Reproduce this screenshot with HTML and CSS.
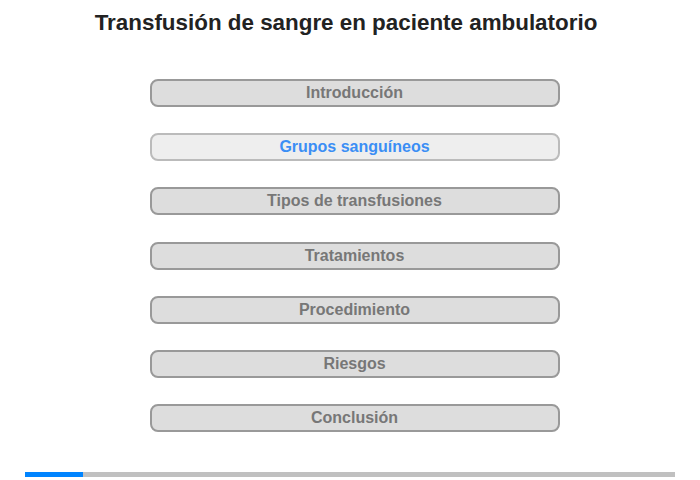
FILE: index.html
```html
<!DOCTYPE html>
<html lang="es">
<head>
<meta charset="utf-8">
<title>Transfusión de sangre en paciente ambulatorio</title>
<link rel="stylesheet" href="styles.css">
</head>
<body>
<div class="page">
  <h1 class="title">Transfusión de sangre en paciente ambulatorio</h1>
  <nav class="menu">
    <div class="item">Introducción</div>
    <div class="item active">Grupos sanguíneos</div>
    <div class="item">Tipos de transfusiones</div>
    <div class="item">Tratamientos</div>
    <div class="item">Procedimiento</div>
    <div class="item">Riesgos</div>
    <div class="item">Conclusión</div>
  </nav>
  <div class="progress"><div class="progress-fill" style="width:58px"></div></div>
</div>
</body>
</html>
```

FILE: styles.css
```css
html, body {
  margin: 0;
  padding: 0;
  background: #fff;
}
body {
  font-family: "Liberation Sans", Arial, sans-serif;
  width: 700px;
  height: 480px;
  overflow: hidden;
}
.page {
  display: flex;
  flex-direction: column;
  align-items: center;
  height: 480px;
}
.title {
  margin: 0 8px 0 0;
  padding-top: 10px;
  font-size: 22.4px;
  line-height: 25px;
  font-weight: bold;
  color: #222;
  text-align: center;
}
.menu {
  margin-top: 44px;
  margin-left: 9px;
  display: flex;
  flex-direction: column;
  gap: 26.2px;
}
.item {
  box-sizing: border-box;
  width: 410px;
  height: 28px;
  border: 2px solid #999;
  border-radius: 8px;
  background: #dddddd;
  color: #777;
  font-size: 16px;
  font-weight: bold;
  line-height: 24px;
  text-align: center;
}
.item.active {
  background: #eeeeee;
  border-color: #bbb;
  color: #3b8ef5;
}
.progress {
  margin-top: auto;
  margin-bottom: 3px;
  width: 650px;
  height: 5px;
  background: #c0c0c0;
}
.progress-fill {
  height: 100%;
  background: #0084ff;
}
```
